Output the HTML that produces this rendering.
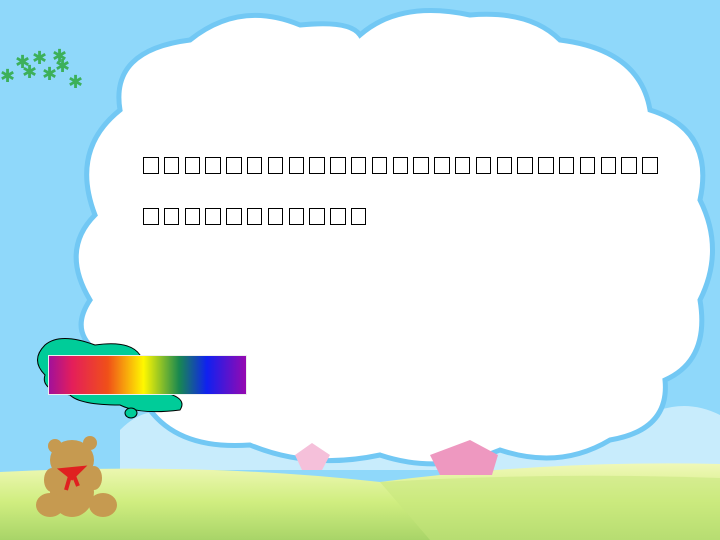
<!DOCTYPE html>
<html><head><meta charset="utf-8"><style>
body{margin:0;width:720px;height:540px;overflow:hidden;background:#8fd8fa;position:relative;font-family:"Liberation Sans","Noto Sans CJK SC",sans-serif}
.ln{position:absolute;left:143px;white-space:nowrap;font-size:0}
.ln span{display:inline-block;box-sizing:border-box;width:15.5px;height:17px;border:1.5px solid #000;margin-right:5.3px;color:transparent;font-size:10px;overflow:hidden;vertical-align:top}
</style></head><body>
<svg width="720" height="540" style="position:absolute;left:0;top:0">
<defs>
<linearGradient id="rb" x1="0" x2="1"><stop offset="0" stop-color="#a0109c"/><stop offset=".12" stop-color="#e41e5a"/><stop offset=".3" stop-color="#f05018"/><stop offset=".48" stop-color="#fff800"/><stop offset=".66" stop-color="#188850"/><stop offset=".8" stop-color="#1020f0"/><stop offset="1" stop-color="#9808b0"/></linearGradient>
<linearGradient id="gr" x1="0" y1="0" x2="0" y2="1"><stop offset="0" stop-color="#f0f8b8"/><stop offset=".5" stop-color="#d0ee80"/><stop offset="1" stop-color="#a8d468"/></linearGradient>
</defs>
<g fill="#c8ecfc">
<path d="M120 430 Q150 400 180 420 Q220 405 260 430 Q320 410 380 430 Q440 420 500 425 Q540 400 580 420 Q620 400 660 410 Q690 400 720 415 L720 470 L120 470Z"/>
</g>
<path d="M90 300 Q60 250 95 215 Q70 150 120 110 Q110 50 190 40 Q240 0 300 25 Q350 20 360 35 Q400 0 470 15 Q530 10 560 40 Q640 50 650 110 Q715 130 700 200 Q725 250 700 300 Q710 360 665 380 Q670 430 610 440 Q560 470 500 450 Q440 475 380 455 Q310 470 250 445 Q180 450 150 410 Q90 400 95 350 Q70 330 90 300Z" fill="#fff" stroke="#72c8f4" stroke-width="5"/>
<path d="M0 472 Q200 462 380 482 Q550 460 720 464 L720 540 L0 540Z" fill="url(#gr)"/>
<path d="M380 482 Q550 472 720 478 L720 540 L430 540Z" fill="#c6e67c" opacity=".5"/>
<path d="M295 455 L312 443 L330 455 L322 470 L302 470Z" fill="#f5c0da"/>
<path d="M430 455 L470 440 L498 455 L492 475 L440 475Z" fill="#ee98c0"/>
<path d="M45 345 Q60 332 95 345 Q130 340 140 355 L150 390 Q190 395 180 410 Q140 415 120 405 Q80 405 70 395 Q40 390 45 375 Q30 360 45 345Z" fill="#00cc99" stroke="#000" stroke-width="1"/>
<ellipse cx="131" cy="413" rx="6" ry="5" fill="#00cc99" stroke="#000" stroke-width="1"/>
<rect x="48.5" y="355.5" width="198" height="39" fill="url(#rb)" stroke="#eee"/>
<g fill="#c69a50">
<ellipse cx="72" cy="460" rx="22" ry="20"/><circle cx="55" cy="446" r="7"/><circle cx="90" cy="443" r="7"/>
<ellipse cx="72" cy="492" rx="22" ry="25"/><ellipse cx="50" cy="505" rx="14" ry="12"/><ellipse cx="103" cy="505" rx="14" ry="12"/>
<ellipse cx="52" cy="480" rx="8" ry="12"/><ellipse cx="94" cy="478" rx="8" ry="12"/>
</g>
<path d="M62 470 L82 468 L72 478Z M70 476 L66 490 M74 476 L78 486" stroke="#e02020" stroke-width="4" fill="#e02020"/>
<g fill="#3cb05a" font-size="18">
<text x="15" y="68">✱</text><text x="32" y="64">✱</text><text x="52" y="62">✱</text><text x="0" y="82">✱</text><text x="22" y="78">✱</text><text x="42" y="80">✱</text><text x="68" y="88">✱</text><text x="55" y="72">✱</text>
</g>
</svg>
<div class="ln" style="top:157px"><span>□</span><span>□</span><span>□</span><span>□</span><span>□</span><span>□</span><span>□</span><span>□</span><span>□</span><span>□</span><span>□</span><span>□</span><span>□</span><span>□</span><span>□</span><span>□</span><span>□</span><span>□</span><span>□</span><span>□</span><span>□</span><span>□</span><span>□</span><span>□</span><span>□</span></div>
<div class="ln" style="top:208px"><span>□</span><span>□</span><span>□</span><span>□</span><span>□</span><span>□</span><span>□</span><span>□</span><span>□</span><span>□</span><span>□</span></div>
</body></html>
